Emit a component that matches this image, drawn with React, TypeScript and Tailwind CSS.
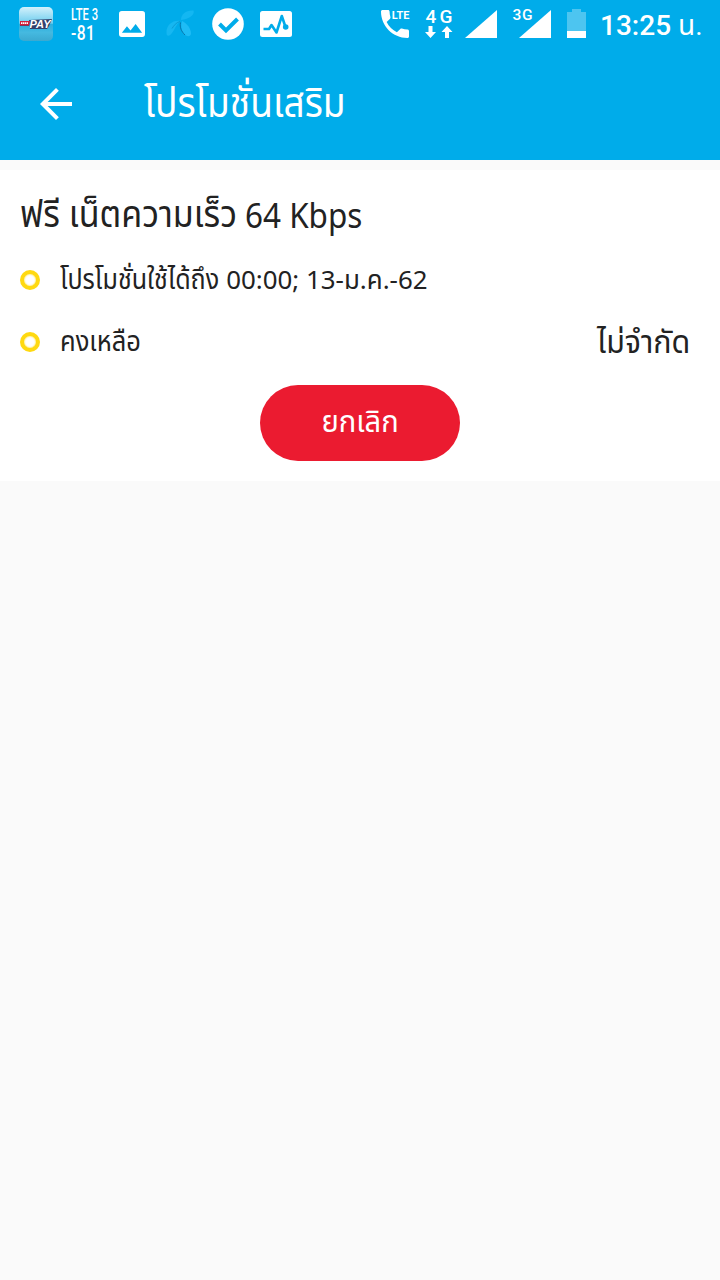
import type { ReactNode } from "react";
import { MdArrowBack } from "react-icons/md";

const thai =
  "font-['Noto_Sans_Thai','Noto_Sans',Roboto,sans-serif] whitespace-nowrap";

function PayIcon() {
  return (
    <svg className="ml-[19px] h-[34px] w-[34px]" viewBox="0 0 34 34">
      <defs>
        <linearGradient id="pay" x1="0" y1="0" x2="0" y2="1">
          <stop offset="0" stopColor="#d3f1fc" />
          <stop offset="0.48" stopColor="#6dcdee" />
          <stop offset="0.5" stopColor="#2aaede" />
          <stop offset="0.75" stopColor="#45b9e0" />
          <stop offset="1" stopColor="#3ba9d0" />
        </linearGradient>
      </defs>
      <rect width="34" height="34" rx="5" fill="url(#pay)" />
      <path d="M1 14h9v5H1zM10 13l23-1-3 7-2 3H11z" fill="#33406b" />
      <path d="M1 14h10l-1 4.500H1z" fill="#d3213c" />
      <path d="M2 16.200h7" stroke="#fff" strokeWidth="1.8" strokeDasharray="1.4 .5" />
      <text
        x="10.5"
        y="20.5"
        textLength="21"
        lengthAdjust="spacingAndGlyphs"
        className="fill-white font-['Liberation_Sans',sans-serif] text-[10px] font-bold italic"
      >
        PAY
      </text>
    </svg>
  );
}

function StatusBar() {
  return (
    <div className="flex h-12 items-center text-white">
      <PayIcon />
      <div className="ml-[18px] flex w-7 flex-col items-start pt-px font-['Roboto'] font-medium">
        <span className="origin-left scale-x-[0.68] text-[16.5px] leading-[17px]">LTE 3</span>
        <span className="origin-left scale-x-[0.78] text-[20px] leading-[20px] tracking-[0.5px]">-81</span>
      </div>
      <svg className="ml-5 h-[26px] w-[26px]" viewBox="3 3 18 18" fill="currentColor">
        <path
          fillRule="evenodd"
          d="M5 3h14a2 2 0 0 1 2 2v14a2 2 0 0 1-2 2H5a2 2 0 0 1-2-2V5a2 2 0 0 1 2-2zM8.500 13.500 5 18h14l-4.500-6-3.500 4.510z"
        />
      </svg>
      <svg className="ml-5 h-[30px] w-[30px]" viewBox="165 9 30 30">
        <path d="M181 20c0-6 5-10 12.500-9.500C195 15 189 19 181 20z" fill="#13b7f2" />
        <path d="M180 21c-7-1-14 4-13.500 12 0 4 3.500 3 5.500 0 3-4 4-8 8-12z" fill="#16b7f1" />
        <path d="M182 21c5 2 9 8 9 12.500-.5 5-7.500 2.500-9-3-1-4-1-6 0-9.500z" fill="#1ebcf5" />
        <path d="M180.500 22.500c-1 5 1 9 4.500 12.500" fill="none" stroke="#0876ab" />
        <path d="M180 21.500c-4 1-6 4-8 7" fill="none" stroke="#0a9bd4" />
      </svg>
      <svg className="ml-[17px] h-8 w-8" viewBox="0 0 32 32">
        <circle cx="16" cy="16" r="15.8" fill="#fff" />
        <path d="M7.500 16 14 22.500 25.500 11" fill="none" stroke="#00acea" strokeWidth="4" />
      </svg>
      <svg className="ml-4 h-[26px] w-8" viewBox="0 0 32 26">
        <rect width="32" height="26" rx="2.5" fill="#fff" />
        <path
          d="M3.500 18h5.500l2.500-4 5 7.500L21.800 5l3.700 11"
          fill="none"
          stroke="#00acea"
          strokeWidth="2.6"
          strokeLinejoin="round"
        />
        <circle cx="25.7" cy="16" r="2.8" fill="#00acea" />
      </svg>

      <svg className="ml-[89px] h-7 w-7 overflow-visible" viewBox="0 0 28 28" fill="currentColor">
        <path
          transform="scale(1.5556) translate(-3 -3)"
          d="M6.620 10.790c1.440 2.830 3.760 5.140 6.590 6.590l2.200-2.200c.27-.27.67-.36 1.020-.24 1.120.37 2.330.57 3.570.57.55 0 1 .45 1 1V20c0 .55-.45 1-1 1-9.390 0-17-7.610-17-17 0-.55.45-1 1-1h3.500c.55 0 1 .45 1 1 0 1.250.2 2.450.57 3.570.11.35.03.74-.25 1.020l-2.200 2.200z"
        />
        <text
          x="10.8"
          y="8.5"
          textLength="17.6"
          lengthAdjust="spacingAndGlyphs"
          className="font-['Roboto',sans-serif] text-[11.5px] font-bold"
        >
          LTE
        </text>
      </svg>
      <svg className="ml-4 h-[30px] w-7 overflow-visible" viewBox="425 9 28 30" fill="currentColor">
        <text x="425.5" y="23" textLength="27" className="font-['Roboto',sans-serif] text-[19px] font-medium">
          4G
        </text>
        <path d="M428.500 26h4v6h3.500l-5.500 6-5.500-6h3.500zM445 38h4v-6h3.500l-5.500-6-5.500 6h3.500z" />
      </svg>
      <svg className="ml-3 h-7 w-8" viewBox="0 0 32 28" fill="currentColor">
        <path d="M32 0v28H0z" />
      </svg>
      <svg className="ml-[15px] h-8 w-[39px] overflow-visible" viewBox="512 8 39 32" fill="currentColor">
        <text x="512.5" y="19.5" textLength="20" className="font-['Roboto',sans-serif] text-[15.5px] font-medium">
          3G
        </text>
        <path d="M551 10v28h-32z" />
      </svg>
      <svg className="ml-4 h-[30px] w-[19px]" viewBox="0 0 19 30" fill="currentColor">
        <path d="M5 0h9v3h5v19H0V3h5z" opacity="0.3" />
        <path d="M0 22h19v7H0z" />
      </svg>
      <div className="ml-[14px] pt-1 font-['Roboto','Noto_Sans_Thai',sans-serif] text-[28px] leading-none">
        <span className="font-medium">13:25</span> น.
      </div>
    </div>
  );
}

function Row({ children, right }: { children: ReactNode; right?: string }) {
  return (
    <div className="flex h-[62px] items-center pr-[30px] pl-5">
      <span className="h-5 w-5 rounded-full border-4 border-[#ffd910] shadow-[inset_0_0_2px_#ffd910]" />
      <span className="ml-5 pt-[2px]">{children}</span>
      {right && (
        <span className="ml-auto origin-right scale-x-[0.95] pt-[2px] text-[32px]">{right}</span>
      )}
    </div>
  );
}

export default function App() {
  return (
    <div className={`${thai} min-h-screen w-full bg-[#fafafa] text-[#222]`}>
      <header className="h-40 bg-[#00acea] text-white">
        <StatusBar />
        <div className="flex h-28 items-center pl-8">
          <MdArrowBack size={48} />
          <h1 className="ml-16 origin-left scale-x-[0.905] pt-[2px] text-[41px]">โปรโมชั่นเสริม</h1>
        </div>
      </header>

      <section className="mt-[10px] h-[311px] bg-white text-[28px]">
        <h2 className="flex h-[79px] items-center pt-[15px] pl-5">
          <span className="-mr-[18px] origin-left scale-x-[0.922] text-[37px]">ฟรี เน็ตความเร็ว</span>
          <span className="ml-2 origin-left scale-x-[0.925] text-[34px]">64 Kbps</span>
        </h2>
        <Row>
          <span className="-mr-[19px] inline-block origin-left scale-x-[0.895]">
            โปรโมชั่นใช้ได้ถึง
          </span>{" "}
          <span className="text-[25.9px]">00:00; 13-ม.ค.-62</span>
        </Row>
        <Row right="ไม่จำกัด">
          <span className="inline-block origin-left scale-x-[0.91]">คงเหลือ</span>
        </Row>
        <button className="mx-auto mt-3 flex h-[76px] w-[200px] items-center justify-center rounded-full bg-[#eb1b30] text-white">
          <span className="scale-x-[0.94] pt-px text-[31px]">ยกเลิก</span>
        </button>
      </section>
    </div>
  );
}
